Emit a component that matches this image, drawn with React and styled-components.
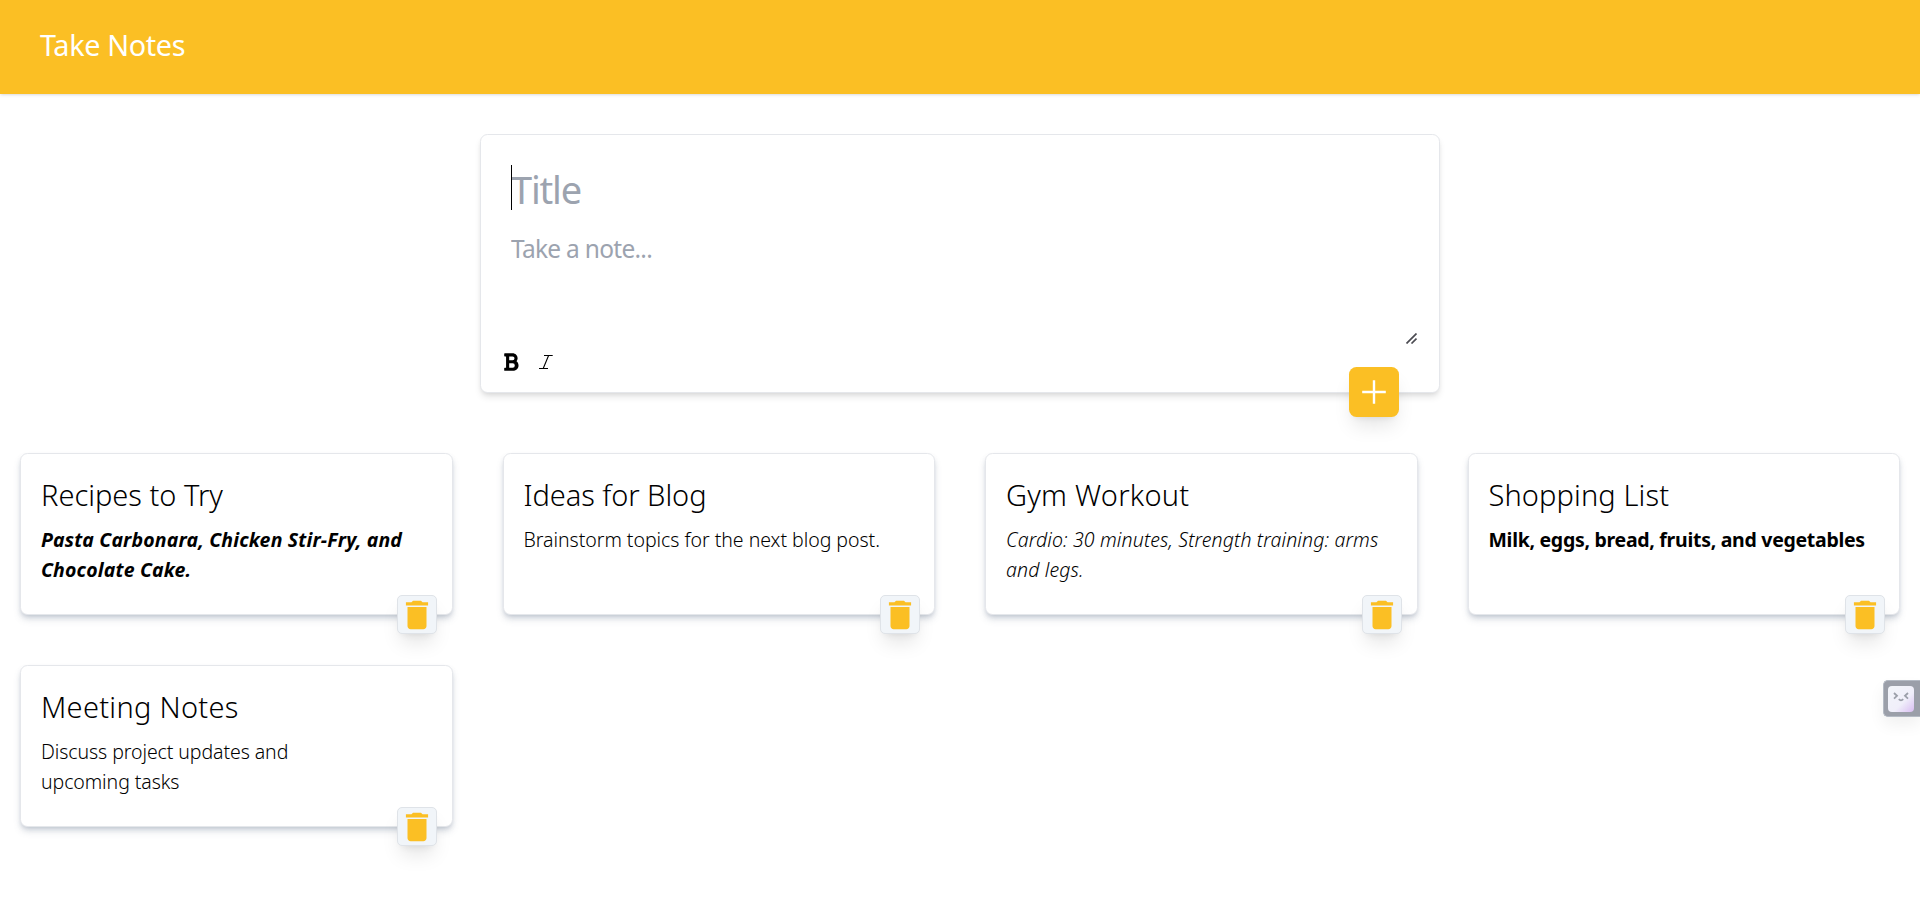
import React from "react";
import styled, { createGlobalStyle } from "styled-components";
import { FaBold } from "react-icons/fa";
import { MdDelete } from "react-icons/md";

const AMBER = "#fbbf24";

const GlobalStyle = createGlobalStyle`
  *, *::before, *::after { box-sizing: border-box; }
  body {
    margin: 0;
    background: #fff;
    color: #000;
    font-family: "Noto Sans", "Open Sans", sans-serif;
  }
  input, textarea, button { font-family: inherit; }
`;

const Page = styled.div`
  min-height: 902px;
`;

const Header = styled.header`
  height: 94px;
  padding: 27px 40px;
  background: ${AMBER};
  box-shadow: 0 1.25px 3.75px rgba(0, 0, 0, 0.1), 0 1.25px 2.5px -1.25px rgba(0, 0, 0, 0.1);
`;

const Brand = styled.h1`
  margin: 0;
  color: #fff;
  font-size: 28.8px;
  line-height: 36px;
  font-weight: 400;
  letter-spacing: -0.35px;
`;

const Main = styled.main`
  display: flex;
  flex-direction: column;
  gap: 60px;
  padding: 40px 20px;
`;

const Composer = styled.form`
  position: relative;
  display: flex;
  flex-direction: column;
  align-self: center;
  width: 960px;
  height: 259px;
  padding: 31px 20px 0 30px;
  background: #fff;
  border: 1px solid #e5e7eb;
  border-radius: 7.5px;
  box-shadow: 0 5px 7.5px -1.25px rgba(0, 0, 0, 0.1), 0 2.5px 5px -2.5px rgba(0, 0, 0, 0.1);
`;

const TitleField = styled.div`
  position: relative;
  display: flex;
  height: 45px;
`;

const TitleInput = styled.input`
  width: 100%;
  height: 46px;
  padding: 0;
  border: 0;
  outline: 0;
  background: transparent;
  font-size: 38px;
  line-height: 46px;
  letter-spacing: -1.2px;
  &::placeholder { color: #9ca3af; opacity: 1; }
`;

const Caret = styled.span`
  position: absolute;
  left: 0;
  top: -1px;
  width: 1px;
  height: 45px;
  background: #000;
`;

const BodyField = styled.div`
  position: relative;
  height: 116px;
  margin-top: 20px;
`;

const BodyInput = styled.textarea`
  display: block;
  width: 100%;
  height: 100%;
  padding: 0;
  border: 0;
  outline: 0;
  resize: none;
  overflow: hidden;
  background: transparent;
  font-size: 24.5px;
  line-height: 36px;
  letter-spacing: -0.72px;
  &::placeholder { color: #9ca3af; opacity: 1; }
`;

const Grip = styled.svg`
  position: absolute;
  right: 2px;
  bottom: 3px;
  width: 11px;
  height: 11px;
`;

const FormatBar = styled.div`
  display: flex;
  align-items: center;
  gap: 15px;
  height: 30px;
  margin-left: -10px;
`;

const FormatButton = styled.button`
  display: grid;
  place-items: center;
  width: 20px;
  height: 20px;
  padding: 0;
  border: 0;
  background: none;
  color: #000;
`;

const AddButton = styled.button`
  position: absolute;
  right: 40px;
  bottom: -25px;
  display: grid;
  place-items: center;
  width: 50px;
  height: 50px;
  padding: 0;
  border: 0;
  border-radius: 7.5px;
  background: ${AMBER};
  box-shadow: 0 12.5px 18.75px -3.75px rgba(0, 0, 0, 0.1), 0 5px 7.5px -5px rgba(0, 0, 0, 0.1);
`;

const NoteGrid = styled.section`
  display: grid;
  grid-template-columns: repeat(4, 1fr);
  gap: 50px;
`;

const NoteCard = styled.article`
  position: relative;
  height: 162px;
  padding: 23px 19px 23px 20px;
  background: #fff;
  border: 1px solid #e5e7eb;
  border-radius: 7.5px;
  box-shadow: 0 5px 7.5px -1.25px rgba(100, 116, 139, 0.25), 0 2.5px 5px -2.5px rgba(100, 116, 139, 0.35);
`;

const NoteTitle = styled.h2`
  margin: 0 0 12px;
  font-size: 29px;
  line-height: 36px;
  font-weight: 300;
  letter-spacing: ${(p) => p.$tracking}px;
  white-space: nowrap;
`;

const NoteBody = styled.p`
  margin: 0;
  font-size: 19.5px;
  line-height: 30px;
  font-weight: ${(p) => (p.$bold ? 700 : 300)};
  font-style: ${(p) => (p.$italic ? "italic" : "normal")};
  letter-spacing: ${(p) => p.$tracking}px;
  white-space: pre-line;
`;

const DeleteButton = styled.button`
  position: absolute;
  right: 14.5px;
  bottom: -19.5px;
  display: grid;
  place-items: center;
  width: 40px;
  height: 39px;
  padding: 0;
  border: 1px solid #dfe3e8;
  border-radius: 5px;
  background: #f1f5f9;
  color: ${AMBER};
  box-shadow: 0 12.5px 18.75px -3.75px rgba(0, 0, 0, 0.1), 0 5px 7.5px -5px rgba(0, 0, 0, 0.1);
  svg { display: block; }
`;

const SideWidget = styled.aside`
  position: fixed;
  right: 0;
  top: 680px;
  display: flex;
  align-items: center;
  width: 37px;
  height: 37px;
  padding-left: 4px;
  border: 1px solid #b4bac4;
  border-right: 0;
  border-radius: 5px 0 0 5px;
  background: #9b9fa9;
  box-shadow: 0 8px 16px rgba(0, 0, 0, 0.06);
`;

const Face = styled.div`
  display: grid;
  place-items: center;
  width: 26px;
  height: 26px;
  padding-bottom: 4px;
  border-radius: 4px;
  background: linear-gradient(135deg, #f2f5fa 0%, #f0effa 60%, #d9bdf2 100%);
`;

const notes = [
  { title: "Recipes to Try", titleTracking: 0, body: "Pasta Carbonara, Chicken Stir-Fry, and Chocolate Cake.", bold: true, italic: true, tracking: 0.16 },
  { title: "Ideas for Blog", titleTracking: -0.05, body: "Brainstorm topics for the next blog post.", tracking: -0.03 },
  { title: "Gym Workout", titleTracking: 0.25, body: "Cardio: 30 minutes, Strength training: arms and legs.", italic: true, tracking: 0.14 },
  { title: "Shopping List", titleTracking: 0.12, body: "Milk, eggs, bread, fruits, and vegetables", bold: true, tracking: -0.29 },
  { title: "Meeting Notes", titleTracking: 0.3, body: "Discuss project updates and\nupcoming tasks", tracking: -0.08 },
];

function Note({ note }) {
  return (
    <NoteCard>
      <NoteTitle $tracking={note.titleTracking}>{note.title}</NoteTitle>
      <NoteBody $bold={note.bold} $italic={note.italic} $tracking={note.tracking}>{note.body}</NoteBody>
      <DeleteButton aria-label="Delete note">
        <MdDelete size={38} />
      </DeleteButton>
    </NoteCard>
  );
}

export default function App() {
  return (
    <Page>
      <GlobalStyle />
      <Header>
        <Brand>Take Notes</Brand>
      </Header>
      <Main>
        <Composer onSubmit={(e) => e.preventDefault()}>
          <TitleField>
            <TitleInput placeholder="Title" />
            <Caret />
          </TitleField>
          <BodyField>
            <BodyInput placeholder="Take a note..." />
            <Grip viewBox="0 0 11 11" stroke="#4b4b52" strokeWidth="1.7" fill="none">
              <path d="M0.5 10.5L10.5 0.5M5.5 10.5L10.5 5.5" />
            </Grip>
          </BodyField>
          <FormatBar>
            <FormatButton type="button" aria-label="Bold">
              <FaBold size={20} />
            </FormatButton>
            <FormatButton type="button" aria-label="Italic">
              <svg width="20" height="20" viewBox="0 0 20 20" fill="none" stroke="currentColor" strokeWidth="1.1">
                <path d="M8 3.5H16.7M3 16.5H12M12.6 3.5L7.2 16.5" />
              </svg>
            </FormatButton>
          </FormatBar>
          <AddButton type="submit" aria-label="Add note">
            <svg width="24" height="24" viewBox="0 0 24 24" stroke="#fff" strokeWidth="2.4">
              <path d="M12 0.2V23.8M0.2 12H23.8" />
            </svg>
          </AddButton>
        </Composer>
        <NoteGrid>
          {notes.map((note) => (
            <Note key={note.title} note={note} />
          ))}
        </NoteGrid>
      </Main>
      <SideWidget>
        <Face>
          <svg width="16" height="10" viewBox="0 0 16 10" fill="none" stroke="#9b9fa9" strokeWidth="1.8">
            <path d="M1 1L4 3.8L1 6.6M15 1L12 3.8L15 6.6M5.8 7.2Q8 9.6 10.2 7.2" />
          </svg>
        </Face>
      </SideWidget>
    </Page>
  );
}
